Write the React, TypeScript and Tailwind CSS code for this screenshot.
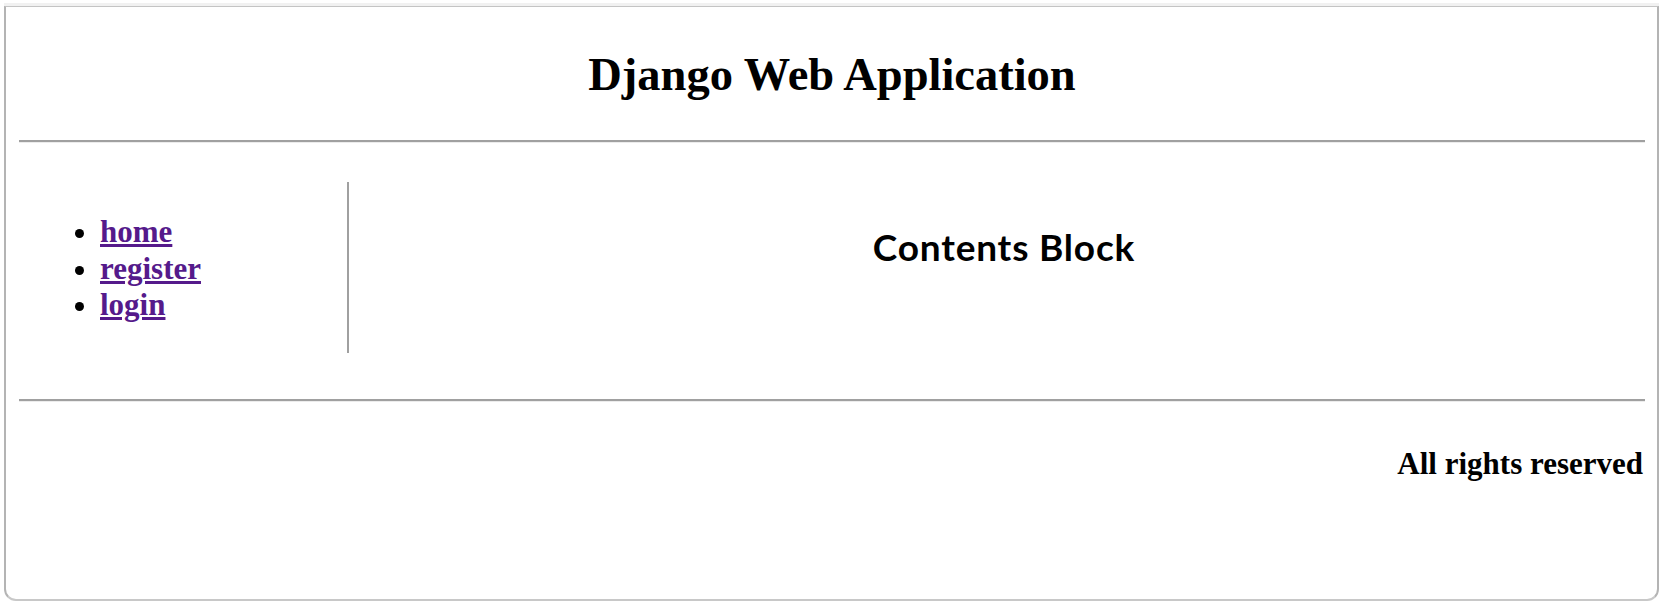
const serif = { fontFamily: '"Liberation Serif", "Times New Roman", serif' };

function Rule() {
  return <div className="h-[3px] border-t-2 border-b border-t-[#a0a0a0] border-b-[#ececec]" />;
}

export default function App() {
  const links = ["home", "register", "login"];

  return (
    <div className="w-[1663px] h-[604px] bg-white overflow-hidden" style={serif}>
      {/* window strip */}
      <div className="mt-[3px] ml-[4px] w-[1655px] h-[3px] bg-[#f1f1f1]" />

      <div className="ml-[4px] w-[1655px] h-[595px] border-t border-t-[#c4c4c4] border-x-2 border-x-[#b4b4b4] border-b-2 border-b-[#c8c8c8] rounded-b-[12px] pl-[13px] pr-[12px]">
        {/* Header */}
        <h1 className="pt-[42px] text-center text-[46.5px] leading-[52px] font-bold text-black">
          Django Web Application
        </h1>
        <div className="mt-[39px]">
          <Rule />
        </div>

        {/* Body */}
        <div className="flex mt-[39px] h-[171px]">
          <div className="w-[330px] shrink-0 border-r-2 border-r-[#a0a0a0]">
            <ul className="list-disc pl-[81px] pt-[32px] text-[31px] leading-[36.5px] font-bold">
              {links.map((l) => (
                <li key={l}>
                  <a href="#" className="text-[#551a8b] underline">
                    {l}
                  </a>
                </li>
              ))}
            </ul>
          </div>
          <div className="flex-1 text-center pl-[14px]">
            <h2
              className="pt-[43px] text-[37px] leading-[44px] tracking-[0.8px] font-bold text-black"
              style={{ fontFamily: 'Lato, "Open Sans", sans-serif' }}
            >
              Contents Block
            </h2>
          </div>
        </div>

        <div className="mt-[46px]">
          <Rule />
        </div>

        {/* Footer */}
        <p className="pt-[44px] pr-[2px] text-right text-[31px] leading-[36px] font-bold text-black">
          All rights reserved
        </p>
      </div>
    </div>
  );
}
